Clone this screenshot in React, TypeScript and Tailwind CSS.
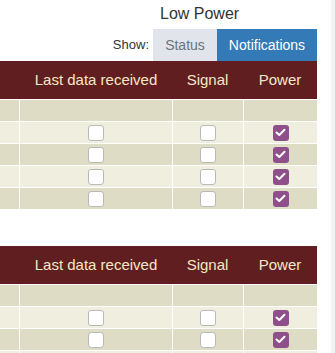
const rowsA = [true, true, true, true]
const rowsB = [true, true, true]

function Box({ checked }: { checked?: boolean }) {
  if (checked) {
    return (
      <span className="flex h-[16px] w-[16px] items-center justify-center rounded-[3px] bg-[#8f4f8b]">
        <svg width="11" height="9" viewBox="0 0 11 9" fill="none">
          <path d="M1.5 4.5 L4.3 7 L9.5 1.8" stroke="white" strokeWidth="2" strokeLinecap="round" strokeLinejoin="round" />
        </svg>
      </span>
    )
  }
  return <span className="block h-[16px] w-[16px] rounded-[3px] border border-[#b9b9b9] bg-white" />
}

function Row({ bg, blank }: { bg: string; blank?: boolean }) {
  return (
    <div className="flex h-[21px] gap-px">
      <div className={`w-[19px] ${bg}`} />
      <div className={`flex w-[152px] items-center justify-center ${bg}`}>{!blank && <Box />}</div>
      <div className={`flex w-[70px] items-center justify-center ${bg}`}>{!blank && <Box />}</div>
      <div className={`flex w-[73px] items-center justify-center ${bg}`}>{!blank && <Box checked />}</div>
    </div>
  )
}

function Table({ rows }: { rows: boolean[] }) {
  return (
    <div className="flex w-[317px] flex-col gap-px">
      <div className="flex h-[38px] items-center bg-[#611e20] text-[15px] text-[#f4e8c4]">
        <div className="w-[20px]" />
        <div className="w-[152px] text-center">Last data received</div>
        <div className="w-[71px] text-center">Signal</div>
        <div className="w-[74px] text-center">Power</div>
      </div>
      <Row bg="bg-[#dfdcc5]" blank />
      {rows.map((_, i) => (
        <Row key={i} bg={i % 2 === 0 ? "bg-[#f0efdf]" : "bg-[#dfdcc5]"} />
      ))}
    </div>
  )
}

export default function App() {
  return (
    <div className="relative h-[353px] w-[335px] overflow-hidden bg-white font-['Liberation_Sans',Arial,sans-serif] text-[#333]">
      <div className="absolute right-0 top-0 h-full w-[4px] bg-[#f4f4f4]" />
      <div className="h-[29px] pl-[160px] pt-[3px] text-[16px] leading-[22px]">Low Power</div>
      <div className="flex h-[32px] w-[317px] items-center justify-end text-[14px]">
        <span className="mr-[4px] text-[13px]">Show:</span>
        <span className="flex h-full w-[64px] items-center justify-center bg-[#e1e5eb] text-[#6c737a]">Status</span>
        <span className="flex h-full w-[100px] items-center justify-center bg-[#337ab7] text-white">Notifications</span>
      </div>
      <Table rows={rowsA} />
      <div className="h-[37px]" />
      <Table rows={rowsB} />
    </div>
  )
}
